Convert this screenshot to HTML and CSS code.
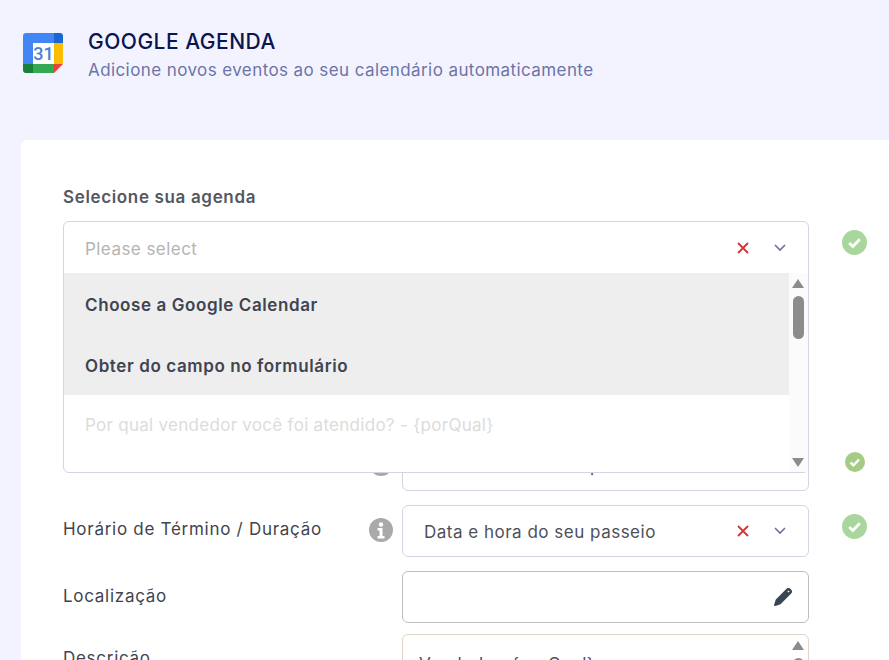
FILE: index.html
```html
<!DOCTYPE html>
<html lang="en">

<head>
  <meta charset="UTF-8">
  <meta name="viewport" content="width=device-width, initial-scale=1.0">
  <title>Google Agenda</title>
  <link rel="stylesheet" href="styles.css">
</head>

<body>
  <header class="app-header">
    <svg class="app-logo" viewBox="0 0 40 40" width="40" height="40" aria-hidden="true">
      <path d="M3 0h28v10H10v21H0V3a3 3 0 0 1 3-3z" fill="#4285f4" />
      <path d="M31 0h6a3 3 0 0 1 3 3v7h-9z" fill="#1967d2" />
      <rect x="31" y="10" width="9" height="21" fill="#fbbc04" />
      <rect x="10" y="31" width="21" height="9" fill="#34a853" />
      <path d="M0 31h10v9H3a3 3 0 0 1-3-3z" fill="#188038" />
      <path d="M31 31h9l-9 9z" fill="#ea4335" />
      <rect x="10" y="10" width="21" height="21" fill="#fff" />
      <text x="20.500" y="27" class="app-logo-text" text-anchor="middle">31</text>
    </svg>
    <div>
      <h1 class="app-title">GOOGLE AGENDA</h1>
      <p class="app-subtitle">Adicione novos eventos ao seu calendário automaticamente</p>
    </div>
  </header>

  <main class="card">
    <div class="select-block">
      <label class="field-title">Selecione sua agenda</label>
      <div class="select-row">
        <div class="spacer-box"></div>
        <svg class="check" viewBox="0 0 26 26" width="25" height="25"><circle cx="13" cy="13" r="13" fill="#a9d69c" /><path d="M7.500 13.500l3.800 3.600 7.200-7.400" fill="none" stroke="#fff" stroke-width="3" /></svg>
      </div>

      <div class="dropdown">
        <div class="dropdown-head">
          <span class="placeholder">Please select</span>
          <svg class="icon-x" viewBox="0 0 12 12" width="12" height="12"><path d="M1 1l10 10M11 1L1 11" stroke="#d1343b" stroke-width="1.800" /></svg>
          <svg class="icon-chevron" viewBox="0 0 12 8" width="12" height="8"><path d="M1 1l5 5 5-5" fill="none" stroke="#6d6fa5" stroke-width="1.600" /></svg>
        </div>
        <div class="dropdown-body">
          <ul class="option-list">
            <li class="option option-group">Choose a Google Calendar</li>
            <li class="option option-group">Obter do campo no formulário</li>
            <li class="option option-muted">Por qual vendedor você foi atendido? - {porQual}</li>
          </ul>
          <div class="scrollbar">
            <span class="arrow-up"></span>
            <span class="thumb"></span>
            <span class="arrow-down"></span>
          </div>
        </div>
      </div>
    </div>

    <div class="form-row">
      <label class="row-label">Horário de Início</label>
      <svg class="info" viewBox="0 0 24 24" width="24" height="24"><circle cx="12" cy="12" r="12" fill="#a9a9a9" /><circle cx="12" cy="6.500" r="2.200" fill="#fff" /><path d="M8.500 10h5v8h2v2.500h-7V18h2v-5.500h-2z" fill="#fff" /></svg>
      <div class="input-box"><span class="input-text">Data e hora do seu passeio</span></div>
      <svg class="check check-small" viewBox="0 0 20 20" width="20" height="20"><circle cx="10" cy="10" r="10" fill="#a5cc85" /><path d="M5.500 10.500l3 2.800 5.500-5.800" fill="none" stroke="#fff" stroke-width="2.400" /></svg>
    </div>

    <div class="form-row">
      <label class="row-label">Horário de Término / Duração</label>
      <svg class="info" viewBox="0 0 24 24" width="24" height="24"><circle cx="12" cy="12" r="12" fill="#a9a9a9" /><circle cx="12" cy="6.500" r="2.200" fill="#fff" /><path d="M8.500 10h5v8h2v2.500h-7V18h2v-5.500h-2z" fill="#fff" /></svg>
      <div class="input-box">
        <span class="input-text">Data e hora do seu passeio</span>
        <svg class="icon-x" viewBox="0 0 12 12" width="12" height="12"><path d="M1 1l10 10M11 1L1 11" stroke="#d1343b" stroke-width="1.800" /></svg>
        <svg class="icon-chevron" viewBox="0 0 12 8" width="12" height="8"><path d="M1 1l5 5 5-5" fill="none" stroke="#6d6fa5" stroke-width="1.600" /></svg>
      </div>
      <svg class="check" viewBox="0 0 26 26" width="25" height="25"><circle cx="13" cy="13" r="13" fill="#a9d69c" /><path d="M7.500 13.500l3.800 3.600 7.200-7.400" fill="none" stroke="#fff" stroke-width="3" /></svg>
    </div>

    <div class="form-row form-row-tight">
      <label class="row-label">Localização</label>
      <span class="info-gap"></span>
      <div class="input-box input-dark">
        <svg class="icon-pencil" viewBox="0 0 18 18" width="18" height="18"><path d="M12.500.8a2.700 2.700 0 0 1 3.800 0l.9.900a2.700 2.700 0 0 1 0 3.800L6.500 16.300l-5 1.600c-.8.300-1.600-.5-1.300-1.300l1.600-5z" fill="#3a4552" /><path d="M13.800 2.800l1.400 1.400" stroke="#fff" stroke-width="1.200" /></svg>
      </div>
    </div>

    <div class="form-row">
      <label class="row-label">Descrição</label>
      <span class="info-gap"></span>
      <div class="input-box input-area">
        <span class="area-text">Vendedor: {porQual}</span>
        <div class="area-scroll">
          <span class="arrow-up"></span>
          <span class="thumb thumb-area"></span>
        </div>
      </div>
    </div>
  </main>
</body>

</html>
```

FILE: styles.css
```css
* {
  box-sizing: border-box;
}

html,
body {
  height: 660px;
  overflow: hidden;
}

body {
  margin: 0;
  background-color: #f3f3ff;
  color: #3f4450;
  font-family: 'Inter', sans-serif;
  font-size: 17px;
  letter-spacing: 0.45px;
}

.app-header {
  display: flex;
  align-items: flex-start;
  gap: 25px;
  height: 140px;
  padding: 29px 0 0 23px;
}

.app-logo {
  margin-top: 4px;
}

.app-logo-text {
  font-family: 'Roboto', sans-serif;
  font-size: 18px;
  font-weight: 500;
  letter-spacing: 0;
  fill: #4a7fd8;
}

.app-title {
  margin: 0;
  color: #0a1551;
  font-size: 21px;
  font-weight: 500;
  line-height: 26px;
  letter-spacing: 0.5px;
}

.app-subtitle {
  margin: 3px 0 0;
  color: #6c73a8;
  font-size: 17px;
  line-height: 24px;
  letter-spacing: 0.41px;
}

.card {
  margin-left: 21px;
  height: 520px;
  padding: 45px 0 0 42px;
  background: #fff;
  border-radius: 6px 0 0 0;
}

.select-block {
  position: relative;
  height: 254px;
}

.field-title {
  display: block;
  margin-bottom: 12px;
  color: #55585f;
  font-weight: 600;
  line-height: 24px;
  letter-spacing: 0.65px;
}

.select-row {
  display: flex;
  align-items: center;
  height: 42px;
}

.spacer-box {
  width: 746px;
}

.dropdown {
  position: absolute;
  top: 36px;
  left: 0;
  width: 746px;
  height: 252px;
  background: #fff;
  border: 1px solid #d3d5e2;
  border-radius: 6px;
  z-index: 2;
}

.dropdown-head {
  display: flex;
  align-items: center;
  height: 51px;
  padding: 0 22px 0 21px;
}

.placeholder {
  flex: 1;
  padding-top: 2px;
  color: #b4b4b4;
}

.icon-x {
  margin-right: 25px;
}

.dropdown-body {
  display: flex;
  height: 199px;
}

.option-list {
  flex: 1;
  margin: 0;
  padding: 0;
  list-style: none;
}

.option {
  display: flex;
  align-items: center;
  height: 61px;
  padding: 2px 0 0 21px;
}

.option-group {
  background: #eeeeee;
  color: #3f4450;
  font-weight: 600;
  letter-spacing: 0.6px;
}

.option-muted {
  height: 59px;
  padding-top: 0;
  color: #dcdcdc;
  letter-spacing: 0.28px;
}

.scrollbar {
  display: flex;
  flex-direction: column;
  align-items: center;
  width: 19px;
  padding: 6px 1px 0 0;
  background: #fbfbfb;
}

.arrow-up {
  width: 0;
  height: 0;
  border-left: 6.500px solid transparent;
  border-right: 6.500px solid transparent;
  border-bottom: 9px solid #8c8c8c;
}

.arrow-down {
  width: 0;
  height: 0;
  margin-top: 119px;
  border-left: 6.500px solid transparent;
  border-right: 6.500px solid transparent;
  border-top: 9px solid #8c8c8c;
}

.thumb {
  width: 11px;
  height: 43px;
  margin-top: 8px;
  background: #8c8c8c;
  border-radius: 6px;
}

.form-row {
  display: flex;
  align-items: flex-start;
  margin-bottom: 14px;
}

.form-row-tight {
  margin-bottom: 11px;
}

.row-label {
  width: 306px;
  padding-top: 12px;
  color: #3f4450;
  line-height: 24px;
  letter-spacing: 0.72px;
}

.form-row-tight .row-label {
  padding-top: 13px;
}

.info,
.info-gap {
  flex: none;
  width: 24px;
  margin-right: 9px;
  margin-top: 13px;
}

.input-box {
  display: flex;
  align-items: center;
  width: 407px;
  height: 52px;
  padding: 0 22px 0 21px;
  border: 1px solid #d3d5e2;
  border-radius: 6px;
}

.input-text {
  flex: 1;
  padding-top: 2px;
  color: #4d505a;
  letter-spacing: 0.5px;
}

.input-dark {
  justify-content: flex-end;
  border-color: #bdbdbd;
  padding-right: 16px;
}

.input-area {
  position: relative;
  align-items: flex-start;
  height: 100px;
  padding: 19px 16px;
  border-color: #ddd6c9;
}

.area-text {
  color: #4d505a;
  letter-spacing: 0.5px;
}

.area-scroll {
  position: absolute;
  top: 6px;
  right: 4px;
  display: flex;
  flex-direction: column;
  align-items: center;
}

.check {
  flex: none;
  margin-left: 33px;
}

.form-row .check {
  margin-top: 9px;
}

.form-row .check-small {
  margin-left: 36px;
  margin-top: 13px;
}
```
